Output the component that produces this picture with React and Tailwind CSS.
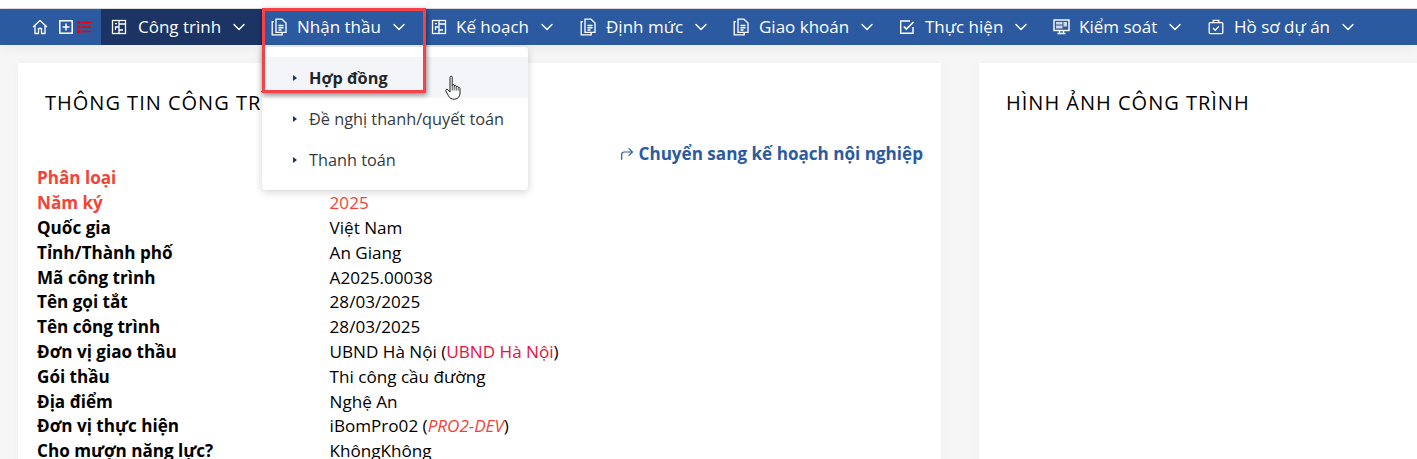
import React from "react";
import { ChevronDown, CornerUpRight } from "lucide-react";

const Grid = () => (
  <svg width="16" height="16" viewBox="0 0 16 16" fill="none" stroke="currentColor" strokeWidth="1.3" className="shrink-0">
    <rect x="1.5" y="1.5" width="13" height="13" />
    <path d="M8 1.500V8H4.500V11M8 8V14.500M8 5H14.500M8 11H12M4 4.700H6" />
  </svg>
);
const Doc = () => (
  <svg width="16" height="18" viewBox="0 0 16 18" fill="none" stroke="currentColor" strokeWidth="1.3" className="shrink-0">
    <path d="M5 1.200h6l4 3.800v9.300H5z" />
    <path d="M3 3.600H1.200v13.200h10v-2" />
    <path d="M7.500 7.500h5M7.500 9.800h5M7.500 12h3" strokeWidth="1.5" />
  </svg>
);
const Check = () => (
  <svg width="16" height="16" viewBox="0 0 16 16" fill="none" stroke="currentColor" strokeWidth="1.4" className="shrink-0">
    <path d="M14 8v6.300H1.700V2H11" />
    <path d="M4.800 7.500l2.600 2.600L14.500 3" strokeWidth="1.6" />
  </svg>
);
const Monitor = () => (
  <svg width="17" height="16" viewBox="0 0 17 16" fill="none" className="shrink-0">
    <rect x="1" y="1" width="15" height="10.500" stroke="currentColor" strokeWidth="1.400" />
    <path d="M3 3h6.500v2.500H3zM10.500 3H14v4.500h-3.500zM3 6.500h6.500v3H3z" fill="currentColor" opacity=".75" />
    <path d="M6.500 12v2M10.500 12v2M4.500 14.500h8" stroke="currentColor" strokeWidth="1.400" />
  </svg>
);
const Case = () => (
  <svg width="16" height="16" viewBox="0 0 16 16" fill="none" stroke="currentColor" strokeWidth="1.3" className="shrink-0">
    <rect x="1.200" y="3.600" width="13.600" height="11" rx="1" />
    <path d="M5.200 3.600V1.400h5.600v2.200M5 9l2.200 2.200L11 7.200" />
  </svg>
);

const items = [
  { label: "Công trình", icon: <Grid />, cls: "bg-[#1c3464]", w: "w-[161px]", ml: "ml-[11px]" },
  { label: "Nhận thầu", icon: <Doc />, cls: "", w: "w-[159px]", ml: "ml-[10px]", pl: "pl-[9px]" },
  { label: "Kế hoạch", icon: <Grid />, cls: "", w: "w-[149px]", ml: "ml-[9px]" },
  { label: "Định mức", icon: <Doc />, cls: "", w: "w-[153px]", ml: "ml-[10px]" },
  { label: "Giao khoán", icon: <Doc />, cls: "", w: "w-[166px]", ml: "ml-[10px]" },
  { label: "Thực hiện", icon: <Check />, cls: "", w: "w-[154px]", ml: "ml-[10px]" },
  { label: "Kiểm soát", icon: <Monitor />, cls: "", w: "w-[155px]", ml: "ml-[10px]" },
  { label: "Hồ sơ dự án", icon: <Case />, cls: "", w: "w-[170px]", ml: "ml-[10px]" },
];

const rows = [
  ["Phân loại", "", true],
  ["Năm ký", "2025", true],
  ["Quốc gia", "Việt Nam"],
  ["Tỉnh/Thành phố", "An Giang"],
  ["Mã công trình", "A2025.00038"],
  ["Tên gọi tắt", "28/03/2025"],
  ["Tên công trình", "28/03/2025"],
  ["Đơn vị giao thầu", <>UBND Hà Nội (<span className="text-[#e4123f]">UBND Hà Nội</span>)</>],
  ["Gói thầu", "Thi công cầu đường"],
  ["Địa điểm", "Nghệ An"],
  ["Đơn vị thực hiện", <>iBomPro02 (<i className="text-[#f44336]">PRO2-DEV</i>)</>],
  ["Cho mượn năng lực?", "KhôngKhông"],
];

const Cursor = () => (
  <svg width="18" height="26" viewBox="0 0 18 26" className="absolute left-[445px] top-[75px]">
    <path d="M5 2.200c0-1.500 2.200-1.500 2.200 0v8.300c0-1.300 2-1.300 2 0v.8c0-1.300 2-1.300 2 0v.9c0-1.200 2-1.200 2 .2 1-.4 1.800 0 1.800 1.100v4.500c0 3-1.600 6-5.300 6.200-3 .2-5-.9-6.200-3.300L1 16.200c-.9-1.500.8-2.700 2-1.400l2 2.200z" fill="#fff" stroke="#222" strokeWidth="1" strokeLinejoin="round" />
    <path d="M7.200 10.500v5M9.200 11.300v4M11.200 12.200v3.500M13.200 12.600v3" stroke="#222" strokeWidth=".8" fill="none" />
  </svg>
);

const Item = ({ children, hover }) => (
  <div className={`h-[41px] flex items-center pl-[31px] text-[16.3px] ${hover ? "bg-[#f4f5f9] font-bold text-[#212529]" : "text-[#343a40]"}`}>
    <span className="w-0 h-0 border-y-[3px] border-y-transparent border-l-[4px] border-l-[#1c3464] mr-[12px]" />
    <span className="pt-[2px]">{children}</span>
  </div>
);

export default function App() {
  return (
    <div className="relative h-[459px] overflow-hidden bg-[#f6f6f6] font-['Open_Sans','Noto_Sans',sans-serif] text-black">
      <div className="h-[9px] bg-white border-b border-[#dcdcdc]" />
      <nav className="h-[36px] flex items-center bg-[#2c5aa0] text-white text-[17px] shadow-[0_4px_12px_rgba(0,0,0,0.04)]">
        <div className="w-[101px] flex items-center pl-[32px]">
          <svg width="16" height="16" viewBox="0 0 16 16" fill="none" stroke="currentColor" strokeWidth="1.300" strokeLinejoin="round">
            <path d="M1 8l7-6.500L15 8M3 6.500V14.500h3.500V9.500h3V14.500H13V6.500" />
          </svg>
          <svg width="14" height="14" viewBox="0 0 14 14" fill="none" stroke="currentColor" strokeWidth="1.500" className="ml-[11px]">
            <rect x=".8" y=".8" width="12.400" height="12.400" />
            <path d="M7 3.500v7M3.500 7h7" />
          </svg>
          <svg width="14" height="12" viewBox="0 0 14 12" className="ml-[4px]" fill="#f00000">
            <path d="M0 0h3.500v3H0zM5 .8h9v1.400H5zM0 4.500h3.500v3H0zM5 5.300h9v1.400H5zM0 9h3.500v3H0zM5 9.800h9v1.400H5z" />
          </svg>
        </div>
        {items.map((it) => (
          <div key={it.label} className={`h-full flex items-center shrink-0 ${it.pl || "pl-[10px]"} ${it.w} ${it.cls}`}>
            <span className="w-[16px] flex justify-center">{it.icon}</span>
            <span className={`${it.ml} whitespace-nowrap`}>{it.label}</span>
            <ChevronDown size={20} strokeWidth={1.7} className="ml-[8px]" />
          </div>
        ))}
      </nav>

      <div className="flex pl-[18px] pt-[18px] gap-[38px]">
        <section className="w-[923px] h-[500px] shrink-0 bg-white shadow-[0_0_10px_rgba(0,0,0,0.03)]">
          <h2 className="pl-[27px] pt-[26px] text-[20px] leading-[28px] tracking-[1px] whitespace-nowrap">THÔNG TIN CÔNG TRÌNH</h2>
          <div className="flex justify-end items-center pr-[18px] mt-[25px] h-[24px] text-[#2c5aa0] font-bold text-[17.1px]">
            <CornerUpRight size={16} strokeWidth={1.8} className="mr-[4px]" />
            Chuyển sang kế hoạch nội nghiệp
          </div>
          <div className="pl-[19px] pt-[0.4px] text-[17.1px] leading-[24.8px]">
            {rows.map(([k, v, red]) => (
              <div key={k} className={`grid grid-cols-[292.6px_1fr] ${red ? "text-[#f44336]" : ""}`}>
                <b className="font-bold">{k}</b>
                <span>{v}</span>
              </div>
            ))}
          </div>
        </section>
        <section className="flex-1 h-[500px] bg-white shadow-[0_0_10px_rgba(0,0,0,0.03)]">
          <h2 className="pl-[27px] pt-[26px] text-[20px] leading-[28px] tracking-[1px] whitespace-nowrap">HÌNH ẢNH CÔNG TRÌNH</h2>
        </section>
      </div>

      <div className="absolute left-[262px] top-[47px] w-[266px] py-[10px] bg-white rounded-[4px] shadow-[0_2px_8px_rgba(0,0,0,0.18)]">
        <Item hover>Hợp đồng</Item>
        <Item>Đề nghị thanh/quyết toán</Item>
        <Item>Thanh toán</Item>
      </div>
      <Cursor />
      <div className="absolute left-[262px] top-[8px] w-[164px] h-[85px] border-[3px] border-[#f44246] shadow-[1px_2px_5px_rgba(0,0,0,0.45)]" />
    </div>
  );
}
